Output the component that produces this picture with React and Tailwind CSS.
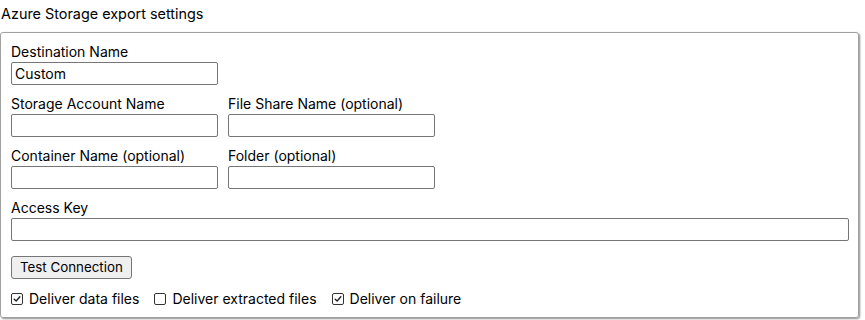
import { useState } from 'react'

function Field({ label, value = '', className = 'w-[207px]' }) {
  return (
    <div className="flex flex-col">
      <label className="mb-[2px] leading-[17px]">{label}</label>
      <input
        defaultValue={value}
        className={`${className} h-[23px] border border-[#767676] rounded-[2px] px-[3px] bg-white text-[14px] outline-none`}
      />
    </div>
  )
}

function Check({ label, checked: initial }) {
  const [checked, setChecked] = useState(initial)
  return (
    <label className="flex items-center cursor-default" onClick={() => setChecked(!checked)}>
      <span className="w-[12px] h-[12px] border border-[#333] rounded-[2px] bg-white flex items-center justify-center mr-[6px]">
        {checked && (
          <svg width="8" height="8" viewBox="0 0 8 8" fill="none">
            <path d="M1.2 4.2 L3.2 6 L6.8 1.8" stroke="#222" strokeWidth="1.4" strokeLinecap="round" strokeLinejoin="round" />
          </svg>
        )}
      </span>
      <span>{label}</span>
    </label>
  )
}

export default function App() {
  return (
    <div className="w-[865px] h-[320px] bg-white text-[14px] text-black font-['Inter','Liberation_Sans',sans-serif]">
      <div className="pt-[5px] pl-[1px] leading-[17px] h-[32px] text-[14.4px]">Azure Storage export settings</div>
      <div className="w-[859px] h-[286px] border border-[#a0a0a0] rounded-[3px] shadow-[1px_1px_2px_rgba(0,0,0,0.45)] pl-[10px] pt-[10px]">
        <div className="mb-[10px]">
          <Field label="Destination Name" value="Custom" />
        </div>
        <div className="flex gap-[10px] mb-[10px]">
          <Field label="Storage Account Name" />
          <Field label="File Share Name (optional)" />
        </div>
        <div className="flex gap-[10px] mb-[10px]">
          <Field label="Container Name (optional)" />
          <Field label="Folder (optional)" />
        </div>
        <div className="mb-[15px]">
          <Field label="Access Key" className="w-[838px]" />
        </div>
        <button className="h-[23px] px-[8px] bg-[#efefef] border border-[#767676] rounded-[3px] leading-none text-[13.33px] mb-[11px]">
          Test Connection
        </button>
        <div className="flex gap-[15px] leading-[17px]">
          <Check label="Deliver data files" checked={true} />
          <Check label="Deliver extracted files" checked={false} />
          <Check label="Deliver on failure" checked={true} />
        </div>
      </div>
    </div>
  )
}
